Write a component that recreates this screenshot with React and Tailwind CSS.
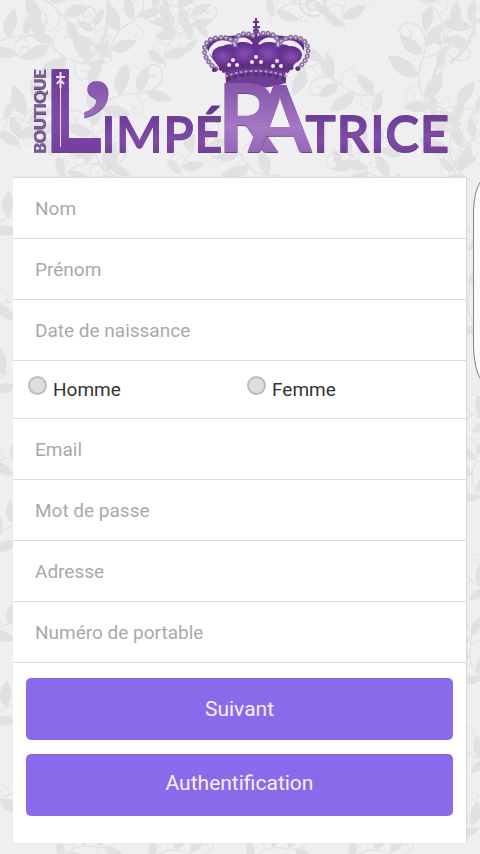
import React from "react";

const SPRIGS = [
  [14, 0, 20, 1], [-14, 60, -30, 0.9], [105, 58, 195, 1.1], [112, 62, -62, 0.9],
  [108, 64, 250, 0.7], [165, 68, -60, 0.85], [150, 10, 10, 0.8],
  [200, 40, 215, 0.7], [95, 120, -30, 1], [20, 150, -65, 1], [120, 178, -120, 1],
  [60, 182, -20, 0.9], [180, 178, -50, 0.8], [0, 120, 20, 0.8], [270, 20, -20, 0.8],
  [345, 30, -70, 0.9], [330, 50, 160, 0.9], [420, 0, 60, 0.9], [385, 90, 190, 0.9],
  [435, 110, -100, 1.1], [430, 120, -10, 0.9], [440, 50, -40, 0.8], [470, 180, -110, 1],
  [400, 175, -160, 0.9], [340, 172, -30, 0.8], [455, 175, -60, 0.8], [280, 175, -150, 0.9],
  [-8, 240, -40, 0.8], [-12, 310, 0, 0.8], [-8, 400, -50, 0.8], [-14, 470, -10, 0.8],
  [-6, 560, -60, 0.8], [-14, 640, -20, 0.8], [-10, 730, -40, 0.8], [-8, 810, -20, 0.9],
  [488, 240, -130, 0.8], [484, 330, -110, 0.8], [492, 420, -140, 0.8], [484, 500, -100, 0.8],
  [490, 590, -130, 0.8], [486, 680, -110, 0.8], [490, 760, -140, 0.8], [482, 830, -120, 0.8],
  [60, 862, -20, 0.8], [150, 862, -10, 0.8], [250, 864, -20, 0.8], [350, 862, -10, 0.8],
];

function FloralBackground() {
  return (
    <svg
      className="absolute inset-0 -z-10 h-full w-full"
      viewBox="0 0 480 854"
      preserveAspectRatio="xMidYMin slice"
      aria-hidden="true"
    >
      <defs>
        <g id="sprig">
          <path
            d="M0 0C14 -12 30 -13 44 -5S70 7 80 -4C88 -14 77 -24 70 -17C65 -12 71 -6 75 -10"
            fill="none" stroke="#e2e2e5" strokeWidth="1.5" strokeLinecap="round"
          />
          <path
            d="M24 -10C26 -22 18 -27 12 -23C8 -19 13 -14 17 -18M48 -3C53 11 45 20 38 16C33 12 38 7 42 10"
            fill="none" stroke="#e6e6e9" strokeWidth="1.5"
          />
          <g fill="#e1e1e4">
            <path d="M12 -8C10 4 18 12 34 13C31 1 23 -7 12 -8Z" />
            <path d="M34 -9C30 -22 39 -31 56 -34C55 -21 46 -11 34 -9Z" />
            <path d="M52 -2C51 -13 59 -20 73 -20C69 -8 62 -2 52 -2Z" />
            <path d="M58 2C68 2 75 9 77 21C65 19 58 12 58 2Z" />
            <path d="M4 -3C-2 -12 0 -21 8 -28C13 -19 12 -9 4 -3Z" />
          </g>
        </g>
      </defs>
      {SPRIGS.map(([x, y, angle, scale], i) => (
        <use key={i} href="#sprig" transform={`translate(${x} ${y}) rotate(${angle}) scale(${scale})`} />
      ))}
      <path
        d="M108 0C108 26 107 48 84 62M472 0C480 28 470 48 450 63M432 112C428 80 436 55 460 36"
        fill="none" stroke="#e2e2e5" strokeWidth="3"
      />
      <path
        d="M314 4m0 0c4-4 8 2 3 5c-8 4-14-5-8-11c8-7 19 1 16 10c-4 12-22 10-25-2c-2-12 10-22 22-18"
        fill="none" stroke="#e0e0e3" strokeWidth="2"
      />
    </svg>
  );
}

function Crown() {
  return (
    <g>
      <path d="M225 66Q254 60 285 66L286 83Q256 93 226 83Z" fill="#6f3d97" />
      <path d="M210 55Q202 42 213 39Q236 34 254 35Q279 34 299 39Q309 44 300 57L288 73Q256 64 223 73Z" fill="#66308d" />
      <path d="M209 52Q215 37 231 43Q219 43 213 56ZM303 52Q297 37 281 43Q293 43 299 56ZM231 44Q244 33 252 44Q241 38 231 44ZM259 44Q269 33 281 44Q270 38 259 44Z" fill="#f1eef5" stroke="#f1eef5" strokeWidth="2" />
      <ellipse cx="223" cy="55" rx="11" ry="9" fill="url(#velvet)" />
      <ellipse cx="244" cy="52" rx="12" ry="10" fill="url(#velvet)" />
      <ellipse cx="268" cy="52" rx="12" ry="10" fill="url(#velvet)" />
      <ellipse cx="291" cy="55" rx="11" ry="9" fill="url(#velvet)" />
      <g fill="none" stroke="#8a6f9f" strokeWidth="5" strokeDasharray="0.1 5" strokeLinecap="round">
        <path d="M216 69C200 57 201 40 216 38C228 36 232 39 235 45M235 45C235 32 247 32 254 36C264 31 279 32 278 45M278 45C283 35 301 35 306 43C312 54 304 65 294 71" />
      </g>
      <g fill="none" stroke="#d6cadf" strokeWidth="2" strokeDasharray="0.1 5" strokeLinecap="round">
        <path d="M216 69C200 57 201 40 216 38C228 36 232 39 235 45M235 45C235 32 247 32 254 36C264 31 279 32 278 45M278 45C283 35 301 35 306 43C312 54 304 65 294 71" />
      </g>
      <g fill="none" strokeLinecap="round">
        <path d="M214 70Q255 61 298 69M228 79Q256 69 284 79" stroke="#55336e" strokeWidth="4" strokeDasharray="1 6" />
        <path d="M226 76Q256 66 286 76" stroke="#b49bc6" strokeWidth="2" strokeDasharray="1 4" />
      </g>
      <g fill="#f3edf7">
        <circle cx="233" cy="60" r="2" /><circle cx="229" cy="65" r="2" /><circle cx="237" cy="65" r="2" />
        <circle cx="256" cy="57" r="2" /><circle cx="252" cy="62" r="2" /><circle cx="261" cy="62" r="2" />
        <circle cx="277" cy="61" r="2" /><circle cx="273" cy="66" r="2" /><circle cx="281" cy="66" r="2" />
      </g>
      <path d="M256 18V38M253 22H259M253 27H260" stroke="#62337f" strokeWidth="2" />
      <circle cx="256" cy="31" r="3" fill="#74429a" />
    </g>
  );
}

function Logo() {
  return (
    <svg viewBox="0 0 480 177" className="block w-full" role="img" aria-label="Boutique L’Impératrice">
      <defs>
        <linearGradient id="deep" x1="0" y1="0" x2="0" y2="1">
          <stop offset="0" stopColor="#66348c" />
          <stop offset="0.6" stopColor="#7f4aa8" />
          <stop offset="1" stopColor="#6b3795" />
        </linearGradient>
        <linearGradient id="light" x1="0" y1="0" x2="0" y2="1">
          <stop offset="0.2" stopColor="#8453aa" />
          <stop offset="0.6" stopColor="#a577c5" />
          <stop offset="1" stopColor="#8d5aae" />
        </linearGradient>
        <radialGradient id="velvet" cx="0.5" cy="0.6" r="0.6">
          <stop offset="0" stopColor="#8750b3" />
          <stop offset="1" stopColor="#5f2a8c" />
        </radialGradient>
        <filter id="bevel" x="-10%" y="-10%" width="120%" height="120%">
          <feDropShadow dx="0" dy="1" stdDeviation="0.6" floodColor="#3d2352" floodOpacity="0.8" />
        </filter>
      </defs>
      <Crown />
      <g className="font-['Lato',sans-serif] font-bold">
        <g filter="url(#bevel)">
          <text transform="translate(46 153) rotate(-90)" fontSize="16" fontWeight="900" fill="#7d5b94">BOUTIQUE</text>
          <text x="43" y="152" fontSize="114" fontWeight="900" fill="url(#deep)">L</text>
          <text x="77" y="161" fontSize="120" className="font-['Liberation_Serif',serif]" fill="url(#light)">’</text>
          <text x="101" y="152" fontSize="50" fill="url(#deep)">IMPÉ</text>
          <text x="305" y="152" fontSize="52" fill="url(#deep)">TRICE</text>
        </g>
        <text x="217" y="152" fontSize="95" fill="url(#light)" filter="url(#bevel)">R</text>
        <text x="248" y="152" fontSize="92" fill="url(#light)" filter="url(#bevel)">A</text>
      </g>
      <g fill="none" stroke="#eadff0">
        <path d="M60.500 88V147" strokeWidth="1" />
        <path d="M60.500 72V88M56 77H65M57 84Q60 78 64 84" strokeWidth="2" />
      </g>
    </svg>
  );
}

function Field({ id, label, type = "text" }) {
  return (
    <div className="h-[61px] border-b border-[#dcdcdc]">
      <input
        id={id}
        name={id}
        type={type}
        aria-label={label}
        placeholder={label}
        className="h-full w-full bg-transparent px-[22px] text-[19px] text-[#333] outline-none placeholder:text-[#a9a9a9]"
      />
    </div>
  );
}

function Choice({ value, label }) {
  return (
    <label className="flex items-start gap-[6px] text-[19px] leading-6 text-[#333]">
      <input
        type="radio"
        name="civilite"
        value={value}
        className="h-[19px] w-[19px] appearance-none rounded-full border-2 border-[#bdbdbd] bg-[#dedede] checked:bg-[#8a6aea]"
      />
      <span className="pt-[2px]">{label}</span>
    </label>
  );
}

export default function App() {
  return (
    <div className="relative isolate min-h-screen overflow-hidden bg-[#efeff2] pb-[11px] font-['Roboto',sans-serif]">
      <FloralBackground />
      <header>
        <Logo />
      </header>
      <form className="ml-[13px] mr-[14px] border-t border-[#dcdcdc] bg-white pb-[27px] shadow-[1px_0_1px_#d8d8dc]">
        <Field id="nom" label="Nom" />
        <Field id="prenom" label="Prénom" />
        <Field id="naissance" label="Date de naissance" />
        <div className="grid h-[58px] grid-cols-2 border-b border-[#dcdcdc] pl-[15px] pt-[15px]">
          <Choice value="homme" label="Homme" />
          <Choice value="femme" label="Femme" />
        </div>
        <Field id="email" label="Email" type="email" />
        <Field id="motdepasse" label="Mot de passe" type="password" />
        <Field id="adresse" label="Adresse" />
        <Field id="portable" label="Numéro de portable" type="tel" />
        <div className="flex flex-col gap-[14px] px-[13px] pt-[15px] text-[21px] text-[#f6f0ff]">
          <button type="submit" className="h-[62px] rounded-[5px] bg-[#8a6aea] pt-[2px]">Suivant</button>
          <button type="button" className="h-[62px] rounded-[5px] bg-[#8a6aea] pb-[2px]">Authentification</button>
        </div>
      </form>
      <svg className="absolute right-0 top-[178px] h-[206px] w-[7px]" viewBox="0 0 7 206" aria-hidden="true">
        <path d="M8 3Q1 12 .5 34V168Q1 191 8 202" fill="#fafafa" stroke="#85858a" strokeWidth="1" />
      </svg>
    </div>
  );
}
